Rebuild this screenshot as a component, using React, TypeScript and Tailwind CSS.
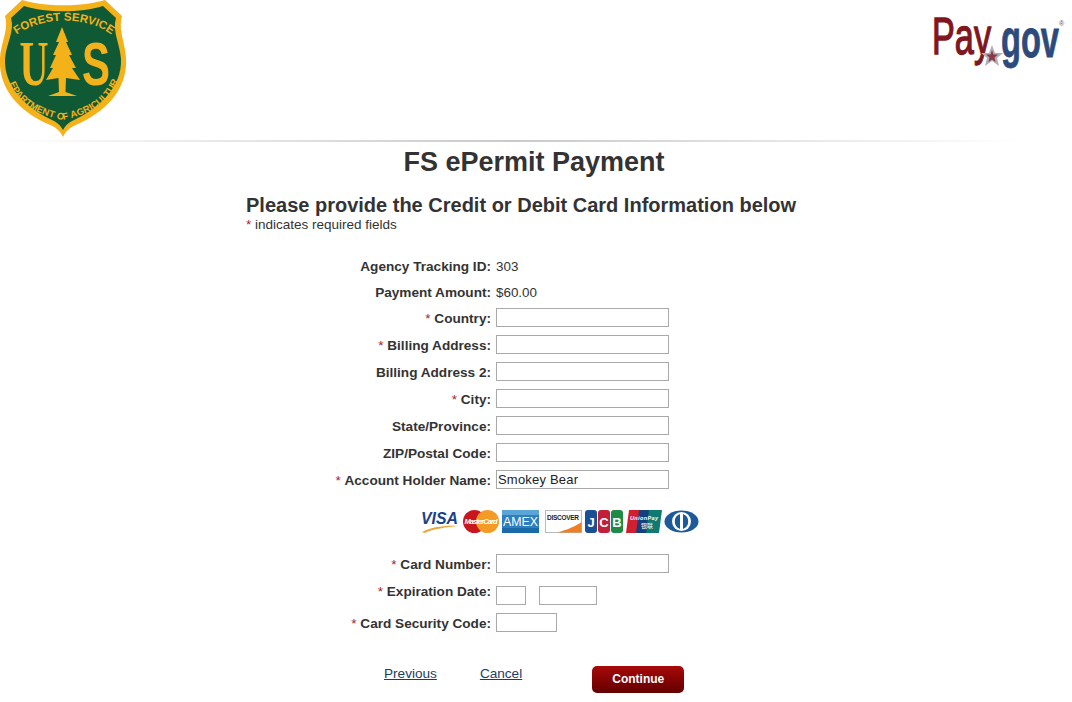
const fieldsTop = [
  { label: "Country", required: true, value: "" },
  { label: "Billing Address", required: true, value: "" },
  { label: "Billing Address 2", required: false, value: "" },
  { label: "City", required: true, value: "" },
  { label: "State/Province", required: false, value: "" },
  { label: "ZIP/Postal Code", required: false, value: "" },
  { label: "Account Holder Name", required: true, value: "Smokey Bear" },
];

function ForestServiceLogo() {
  const shield =
    "M22 0 C45 7 82 7 105 0 L122 16 C118 30 125 42 126 58 C128 90 105 112 78 124 C70 127 66 131 63 137 C60 131 56 127 48 124 C21 112 -2 90 0 58 C1 42 9 30 5 16 Z";
  return (
    <svg width="127" height="138" viewBox="0 0 127 138">
      <path d={shield} fill="#f3b21a" />
      <path
        d="M24 6 C46 13 81 13 103 6 L116 18 C112 31 120 44 121 59 C122 87 100 107 76 119 C69 122 66 125 63 130 C60 125 57 122 50 119 C26 107 4 87 5 59 C6 44 15 31 11 18 Z"
        fill="#0f5a34"
      />
      <path id="fs-top" d="M15 36 C40 16 88 15 113 36" fill="none" />
      <path id="fs-bottom" d="M10 85 C20 108 44 116 63 120 C82 116 106 108 117 83" fill="none" />
      <text fontFamily="Liberation Sans, sans-serif" fontSize="11.500" fontWeight="700" fill="#f3b21a">
        <textPath href="#fs-top" startOffset="50%" textAnchor="middle">
          FOREST SERVICE
        </textPath>
      </text>
      <text fontFamily="Liberation Sans, sans-serif" fontSize="9.500" fontWeight="700" fill="#f3b21a">
        <textPath href="#fs-bottom" startOffset="50%" textAnchor="middle">
          DEPARTMENT OF AGRICULTURE
        </textPath>
      </text>
      <text x="34" y="85" textAnchor="middle" fontFamily="Liberation Serif, serif" fontSize="64" fontWeight="700" fill="#f3b21a" textLength="29" lengthAdjust="spacingAndGlyphs">
        U
      </text>
      <text x="96" y="85" textAnchor="middle" fontFamily="Liberation Sans, sans-serif" fontSize="62" fontWeight="700" fill="#f3b21a" textLength="28" lengthAdjust="spacingAndGlyphs">
        S
      </text>
      <path
        d="M62 27 L68 42 L66 42 L72 55 L69 55 L76 68 L72 68 L80 80 L66 78 L65.500 92 L77 96 L48 96 L59 92 L58.500 78 L46 80 L53 68 L50 68 L56 55 L53 55 L59 42 L56 42 Z"
        fill="#f3b21a"
      />
    </svg>
  );
}

function PayGovLogo() {
  return (
    <svg width="134" height="60" viewBox="0 0 134 60">
      <text x="0" y="41" fontFamily="Liberation Sans, sans-serif" fontSize="52" fill="#7f1620" stroke="#7f1620" strokeWidth="1.400" textLength="59" lengthAdjust="spacingAndGlyphs">
        Pay
      </text>
      <text x="69" y="44" fontFamily="Liberation Sans, sans-serif" fontSize="54" fontWeight="700" fill="#2c4a7c" stroke="#2c4a7c" strokeWidth="0.800" textLength="58" lengthAdjust="spacingAndGlyphs">
        gov
      </text>
      <polygon points="60,32 63,40 71,40 65,45 67,53 60,48 53,53 55,45 49,40 57,40" fill="#b3aeb6" />
      <polygon points="60,37 61.500,41.500 66,41.500 62.500,44.500 63.500,49 60,46.500 56.500,49 57.500,44.500 54,41.500 58.500,41.500" fill="#8a3a44" />
      <text x="127" y="13" fontFamily="Liberation Sans, sans-serif" fontSize="7" fill="#555">
        ®
      </text>
    </svg>
  );
}

function CardRow() {
  return (
    <div className="flex items-start h-[24px]">
      {/* Visa */}
      <svg width="38" height="23" viewBox="0 0 38 23">
        <text x="0" y="14" fontFamily="Liberation Sans, sans-serif" fontSize="17" fontWeight="700" fontStyle="italic" fill="#1a3f8b" textLength="37" lengthAdjust="spacingAndGlyphs">
          VISA
        </text>
        <path d="M1 22 C10 17 24 15 37 16 C26 17 12 19 4 23 Z" fill="#e9a83a" />
      </svg>
      {/* Mastercard */}
      <svg width="36" height="23" viewBox="0 0 36 23" className="ml-[4px]">
        <circle cx="11.500" cy="11.500" r="11.500" fill="#c9161e" />
        <circle cx="24.500" cy="11.500" r="11.500" fill="#f39b25" />
        <text x="18" y="14" textAnchor="middle" fontFamily="Liberation Sans, sans-serif" fontSize="7.500" fontWeight="700" fontStyle="italic" fill="#fff" textLength="33">
          MasterCard
        </text>
      </svg>
      {/* Amex */}
      <svg width="37" height="23" viewBox="0 0 37 23" className="ml-[3px]">
        <rect width="37" height="23" fill="#2d7fc0" />
        <rect width="37" height="5" fill="#5ba4d8" />
        <rect y="18" width="37" height="5" fill="#1b6aa8" />
        <text x="18.500" y="16" textAnchor="middle" fontFamily="Liberation Sans, sans-serif" fontSize="12" fill="#fff" textLength="35" lengthAdjust="spacingAndGlyphs">
          AMEX
        </text>
      </svg>
      {/* Discover */}
      <svg width="37" height="23" viewBox="0 0 37 23" className="ml-[6px]">
        <rect x="0.500" y="0.500" width="36" height="22" fill="#fff" stroke="#bbb" />
        <text x="18" y="10" textAnchor="middle" fontFamily="Liberation Sans, sans-serif" fontSize="6.500" fontWeight="700" fill="#222" textLength="32">
          DISCOVER
        </text>
        <path d="M12 22.500 C22 20 31 16 36.500 12 L36.500 22.500 Z" fill="#ee7f22" />
      </svg>
      {/* JCB */}
      <svg width="38" height="23" viewBox="0 0 38 23" className="ml-[3px]">
        <rect width="12" height="23" rx="3" fill="#1a4f96" />
        <rect x="13" width="12" height="23" rx="3" fill="#c11f3a" />
        <rect x="26" width="12" height="23" rx="3" fill="#1f8a45" />
        <text x="6" y="17" textAnchor="middle" fontFamily="Liberation Sans, sans-serif" fontSize="13" fontWeight="700" fill="#fff">
          J
        </text>
        <text x="19" y="17" textAnchor="middle" fontFamily="Liberation Sans, sans-serif" fontSize="13" fontWeight="700" fill="#fff">
          C
        </text>
        <text x="32" y="17" textAnchor="middle" fontFamily="Liberation Sans, sans-serif" fontSize="13" fontWeight="700" fill="#fff">
          B
        </text>
      </svg>
      {/* UnionPay */}
      <svg width="36" height="23" viewBox="0 0 36 23" className="ml-[3px]">
        <polygon points="3,0 15,0 12,23 0,23" fill="#d0202e" />
        <polygon points="13,0 25,0 22,23 10,23" fill="#163f7e" />
        <polygon points="23,0 36,0 33,23 20,23" fill="#0f7a70" />
        <text x="18" y="10" textAnchor="middle" fontFamily="Liberation Sans, sans-serif" fontSize="5.500" fontStyle="italic" fontWeight="700" fill="#fff" textLength="28">
          UnionPay
        </text>
        <text x="21" y="18" textAnchor="middle" fontFamily="Noto Sans CJK SC, sans-serif" fontSize="6" fill="#fff">
          银联
        </text>
      </svg>
      {/* Diners */}
      <svg width="35" height="23" viewBox="0 0 35 23" className="ml-[2px]">
        <ellipse cx="17.500" cy="11.500" rx="17" ry="11" fill="#1c5a9c" />
        <circle cx="17.500" cy="11.500" r="9.500" fill="#fff" />
        <path d="M16 4 A8 8 0 0 0 16 19 Z M19 4 A8 8 0 0 1 19 19 Z" fill="#1c5a9c" />
      </svg>
    </div>
  );
}

function Req() {
  return <span className="font-normal text-[#a4232b]">* </span>;
}

function TextBox({ value = "", width = "w-[173px]" }: { value?: string; width?: string }) {
  return (
    <input
      readOnly
      value={value}
      className={`${width} h-[19px] border border-[#a9a9a9] bg-white px-[1px] text-[13px] tracking-[0.2px] text-[#222] outline-none`}
    />
  );
}

function Label({ text, required }: { text: string; required?: boolean }) {
  return (
    <div className="w-[250px] shrink-0 pt-[1px] pr-[5px] text-right text-[13.6px] font-bold text-[#333]">
      {required && <Req />}
      {text}:
    </div>
  );
}

export default function App() {
  return (
    <div className="h-[702px] w-[1072px] overflow-hidden bg-white font-['Liberation_Sans',Arial,sans-serif] text-[#333]">
      {/* Header */}
      <header className="flex h-[140px] items-start justify-between pr-[6px]">
        <ForestServiceLogo />
        <div className="pt-[13px]">
          <PayGovLogo />
        </div>
      </header>
      <div className="h-[2px] w-[1024px] bg-gradient-to-r from-white via-[#c9c9c9] to-white" />

      <h1 className="mt-[4px] w-[1068px] text-center text-[27px] leading-[32px] font-bold text-[#333]">
        FS ePermit Payment
      </h1>

      <div className="mt-[15px] pl-[246px]">
        <h2 className="text-[20px] leading-[24px] font-bold text-[#333]">
          Please provide the Credit or Debit Card Information below
        </h2>
        <p className="text-[13.5px] leading-[15px]">
          <span className="text-[#a4232b]">*</span> indicates required fields
        </p>
      </div>

      {/* Form */}
      <form className="mt-[24px] pl-[246px]">
        <div className="flex h-[26px] items-start">
          <Label text="Agency Tracking ID" />
          <span className="pt-[1px] text-[13.4px]">303</span>
        </div>
        <div className="flex h-[26px] items-start">
          <Label text="Payment Amount" />
          <span className="pt-[1px] text-[13.4px]">$60.00</span>
        </div>
        {fieldsTop.map((f) => (
          <div key={f.label} className="flex h-[27px] items-start">
            <Label text={f.label} required={f.required} />
            <TextBox value={f.value} />
          </div>
        ))}

        <div className="mt-[13px] ml-[175px]">
          <CardRow />
        </div>

        <div className="mt-[20px] flex h-[27px] items-start">
          <Label text="Card Number" required />
          <TextBox />
        </div>
        <div className="flex h-[32px] items-start">
          <Label text="Expiration Date" required />
          <div className="flex gap-[13px] pt-[5px]">
            <TextBox width="w-[30px]" />
            <TextBox width="w-[58px]" />
          </div>
        </div>
        <div className="flex h-[27px] items-start">
          <Label text="Card Security Code" required />
          <TextBox width="w-[61px]" />
        </div>

        <div className="mt-[24px] flex h-[34px] items-start">
          <a href="#" className="ml-[138px] text-[13.6px] leading-[20px] text-[#1c3d66] underline">
            Previous
          </a>
          <a href="#" className="ml-[43px] text-[13.6px] leading-[20px] text-[#1c3d66] underline">
            Cancel
          </a>
          <button
            type="button"
            className="ml-[70px] mt-[2px] h-[27px] w-[92px] rounded-[5px] bg-gradient-to-b from-[#a80a0a] to-[#640000] pb-[2px] text-[12px] font-bold text-white"
          >
            Continue
          </button>
        </div>
      </form>
    </div>
  );
}
